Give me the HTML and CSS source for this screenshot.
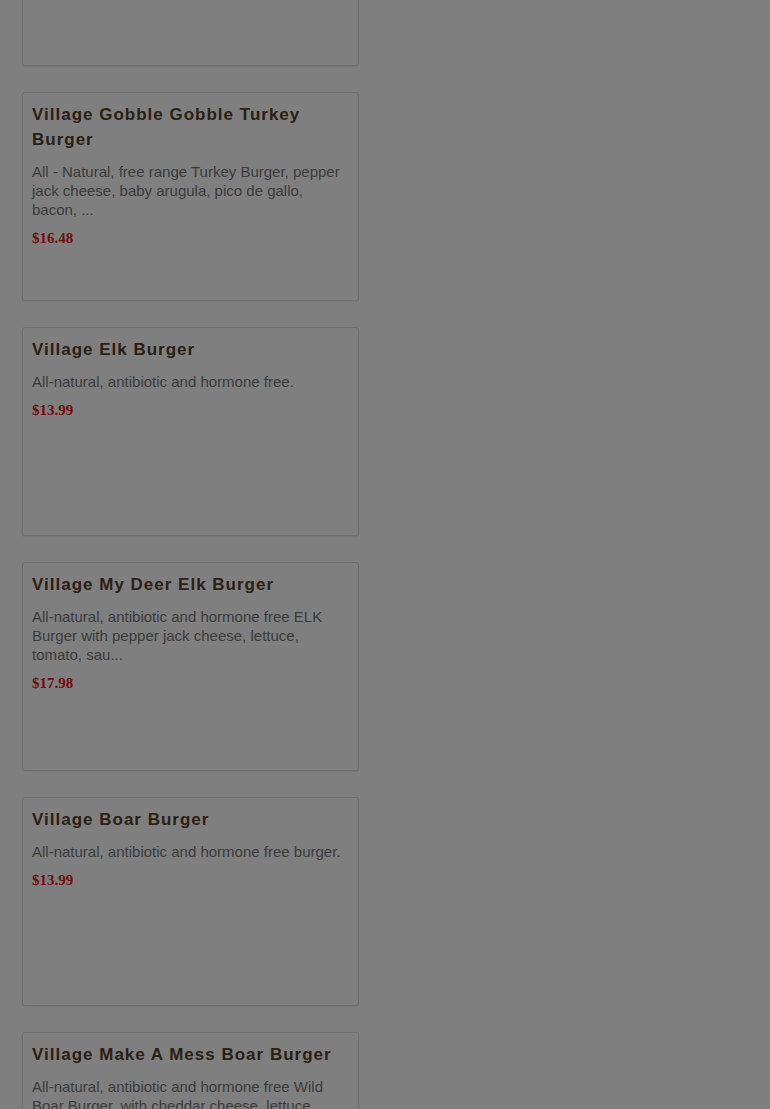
FILE: index.html
```html
<!DOCTYPE html>
<html>
<head>
<meta charset="utf-8">
<link rel="stylesheet" href="styles.css">
</head>
<body>
<div class="menu">
  <div class="card"></div>
  <div class="card">
    <h3 class="title">Village Gobble Gobble Turkey Burger</h3>
    <p class="desc">All - Natural, free range Turkey Burger, pepper jack cheese, baby arugula, pico de gallo, bacon, ...</p>
    <div class="price">$16.48</div>
  </div>
  <div class="card">
    <h3 class="title">Village Elk Burger</h3>
    <p class="desc">All-natural, antibiotic and hormone free.</p>
    <div class="price">$13.99</div>
  </div>
  <div class="card">
    <h3 class="title">Village My Deer Elk Burger</h3>
    <p class="desc">All-natural, antibiotic and hormone free ELK Burger with pepper jack cheese, lettuce, tomato, sau...</p>
    <div class="price">$17.98</div>
  </div>
  <div class="card">
    <h3 class="title">Village Boar Burger</h3>
    <p class="desc">All-natural, antibiotic and hormone free burger.</p>
    <div class="price">$13.99</div>
  </div>
  <div class="card">
    <h3 class="title">Village Make A Mess Boar Burger</h3>
    <p class="desc">All-natural, antibiotic and hormone free Wild Boar Burger, with cheddar cheese, lettuce, tomato, ...</p>
    <div class="price">$17.98</div>
  </div>
</div>
<div class="overlay"></div>
</body>
</html>
```

FILE: styles.css
```css
html, body {
  margin: 0;
  padding: 0;
  background: #fff;
  overflow: hidden;
}
body {
  font-family: "Liberation Sans", Arial, sans-serif;
}
.menu {
  display: flex;
  flex-direction: column;
  gap: 26px;
  width: 337px;
  margin: -143px 0 0 22px;
}
.card {
  box-sizing: border-box;
  height: 209px;
  border: 1px solid #dcdcdc;
  border-radius: 3px;
  background: #fff;
  padding: 9px 10px 10px 9px;
  box-shadow: 0 1px 2px rgba(0,0,0,0.08);
}
.title {
  margin: 0;
  font-size: 17px;
  line-height: 25px;
  font-weight: bold;
  letter-spacing: 1px;
  color: #55412b;
}
.desc {
  margin: 10px 0 0 0;
  font-size: 15px;
  line-height: 19px;
  color: #777;
}
.price {
  margin-top: 10px;
  font-family: "Liberation Serif", "Times New Roman", serif;
  font-weight: bold;
  font-size: 15px;
  line-height: 19px;
  color: #e01b22;
}
.overlay {
  position: fixed;
  inset: 0;
  background: rgba(0,0,0,0.5);
}
```
